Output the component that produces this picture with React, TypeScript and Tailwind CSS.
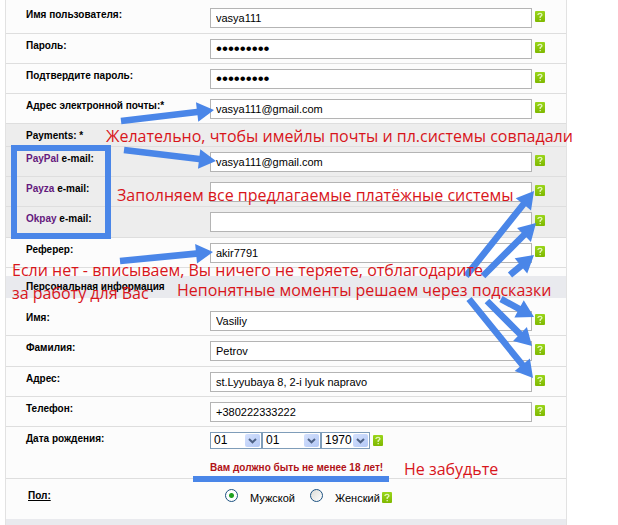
import { ReactNode } from "react";

type Point = [number, number];

const ARROWS: { from: Point; to: Point }[] = [
  { from: [121, 121], to: [214, 110] },
  { from: [124, 150], to: [216, 161] },
  { from: [120, 261], to: [213, 252] },
  { from: [466, 276], to: [534, 191] },
  { from: [483, 276], to: [536, 223] },
  { from: [510, 275], to: [534, 255] },
  { from: [501, 299], to: [534, 317] },
  { from: [487, 301], to: [532, 346] },
  { from: [469, 299], to: [533, 378] },
];

// outline of a block arrow: 6px shaft, 17px head
const arrowPoints = ([x1, y1]: Point, [x2, y2]: Point) => {
  const length = Math.hypot(x2 - x1, y2 - y1);
  const ux = (x2 - x1) / length;
  const uy = (y2 - y1) / length;
  const at = (along: number, side: number) =>
    `${x1 + ux * along - uy * side},${y1 + uy * along + ux * side}`;
  const neck = length - 17;
  return [
    at(0, -3.3),
    at(neck, -3.3),
    at(neck, -9.8),
    at(length, 0),
    at(neck, 9.8),
    at(neck, 3.3),
    at(0, 3.3),
  ].join(" ");
};

const Help = () => (
  <button
    type="button"
    aria-label="Подсказка"
    className="mt-[3px] h-[11px] w-[10px] shrink-0 rounded-[1px] bg-linear-to-b from-[#9ad61a] to-[#7fb800]"
  >
    <svg viewBox="0 0 10 11" className="block h-[11px] w-[10px]" fill="none">
      <path
        d="M3 4V3.4Q3.2 2.4 5 2.4T7 3.8Q7 4.8 5.2 5.6V7M5.2 8V9.2"
        stroke="#e3f5bd"
        strokeWidth="1.3"
      />
    </svg>
  </button>
);

type FieldProps = {
  id: string;
  label: ReactNode;
  value?: string;
  type?: string;
  className?: string;
};

const Field = ({
  id,
  label,
  value = "",
  type = "text",
  className = "h-[30px] pt-[5px]",
}: FieldProps) => (
  <div
    className={`flex items-start border-b border-[#dedede] pr-[21px] pl-5 ${className}`}
  >
    <label
      htmlFor={id}
      className="w-[184px] shrink-0 text-[10px] leading-[14px] font-bold"
    >
      {label}
    </label>
    <input
      id={id}
      type={type}
      defaultValue={value}
      className={`mr-[3px] h-5 min-w-0 flex-1 border border-[#b4b4b4] bg-white px-[5px] outline-none ${
        type === "password" ? "text-[17px]" : "text-[11px]"
      }`}
    />
    <Help />
  </div>
);

const DateSelect = ({
  label,
  value,
  className,
}: {
  label: string;
  value: string;
  className: string;
}) => (
  <div className={`relative h-[17px] ${className}`}>
    <select
      aria-label={label}
      defaultValue={value}
      className="block h-full w-full appearance-none border border-[#7f9db9] bg-white pl-[3px] text-[12px] leading-[15px] outline-none"
    >
      <option>{value}</option>
    </select>
    <span className="pointer-events-none absolute top-[2px] right-[2px] flex h-[13px] w-[15px] items-center justify-center rounded-[2px] bg-linear-to-br from-[#d5e1fd] to-[#b3c8f5]">
      <svg viewBox="0 0 9 6" className="h-[6px] w-[9px]" fill="none">
        <path d="M1 1L4.500 4.300L8 1" stroke="#4d6185" strokeWidth="2" />
      </svg>
    </span>
  </div>
);

const Radio = ({
  id,
  label,
  checked,
}: {
  id: string;
  label: string;
  checked?: boolean;
}) => (
  <>
    <input
      id={id}
      type="radio"
      name="gender"
      defaultChecked={checked}
      className="h-[13px] w-[13px] shrink-0 appearance-none rounded-full border border-[#1d5281] bg-linear-to-br from-[#dcdcd7] to-white checked:bg-[radial-gradient(circle,#21a121_0_2px,#ffffff_3px)]"
    />
    <label htmlFor={id} className="mt-[2px] ml-3 text-[11px] leading-[14px]">
      {label}
    </label>
  </>
);

const Note = ({
  className,
  children,
}: {
  className: string;
  children: ReactNode;
}) => (
  <p
    className={`absolute font-['Open_Sans',sans-serif] text-[16px] leading-5 whitespace-nowrap text-[#d8151b] ${className}`}
  >
    {children}
  </p>
);

const PaymentLabel = ({ name }: { name: string }) => (
  <>
    <a href="#" className="text-[#64197d]">
      {name}
    </a>{" "}
    e-mail:
  </>
);

const App = () => {
  return (
    <div className="relative bg-white font-['Liberation_Sans',sans-serif] text-black">
      <form className="ml-[5px] max-w-[562px] border-x border-[#e2e2e2] bg-[#fcfcfc]">
        <Field
          id="login"
          label="Имя пользователя:"
          value="vasya111"
          className="h-[34px] pt-2"
        />
        <Field id="password" type="password" label="Пароль:" value="123456789" />
        <Field
          id="confirm"
          type="password"
          label="Подтвердите пароль:"
          value="123456789"
        />
        <Field
          id="email"
          label="Адрес электронной почты:*"
          value="vasya111@gmail.com"
        />

        <div className="bg-[#ededed]">
          <h2 className="h-[23px] border-b border-[#dedede] pt-[5px] pl-5 text-[10px] leading-[14px] font-bold">
            Payments: *
          </h2>
          <Field
            id="paypal"
            label={<PaymentLabel name="PayPal" />}
            value="vasya111@gmail.com"
          />
          <Field id="payza" label={<PaymentLabel name="Payza" />} />
          <Field
            id="okpay"
            label={<PaymentLabel name="Okpay" />}
            className="h-[31px] pt-[5px]"
          />
        </div>
        <Field id="referer" label="Реферер:" value="akir7791" />

        <h2 className="mt-2 bg-[#e9eaee] pl-5 text-[10px] leading-[22px] font-bold">
          Персональная информация
        </h2>
        <Field
          id="name"
          label="Имя:"
          value="Vasiliy"
          className="h-[38px] pt-[13px]"
        />
        <Field
          id="surname"
          label="Фамилия:"
          value="Petrov"
          className="h-[31px] pt-[5px]"
        />
        <Field
          id="address"
          label="Адрес:"
          value="st.Lyyubaya 8, 2-i lyuk napravo"
        />
        <Field id="phone" label="Телефон:" value="+380222333222" />

        <div className="flex h-[52px] border-b border-[#dedede] pt-[5px] pl-5">
          <span className="w-[184px] shrink-0 text-[10px] leading-[14px] font-bold">
            Дата рождения:
          </span>
          <div>
            <div className="flex items-start">
              <DateSelect label="День" value="01" className="w-[52px]" />
              <DateSelect label="Месяц" value="01" className="w-[59px]" />
              <DateSelect label="Год" value="1970" className="mr-[3px] w-[49px]" />
              <Help />
            </div>
            <p className="mt-3 text-[10px] leading-[14px] font-bold text-[#b01116]">
              Вам должно быть не менее 18 лет!
            </p>
          </div>
        </div>

        <div className="flex h-10 items-start pt-[10px] pl-[22px]">
          <span className="w-[197px] shrink-0 text-[10px] leading-[14px] font-bold underline">
            Пол:
          </span>
          <Radio id="male" label="Мужской" checked />
          <span className="w-[15px]" />
          <Radio id="female" label="Женский" />
          <span className="w-[2px]" />
          <Help />
        </div>
        <div className="h-[6px] bg-[#e9eaee]" />
      </form>

      <div className="pointer-events-none absolute inset-0 overflow-hidden">
        <svg className="absolute top-0 left-0 h-[525px] w-[618px]">
          <g fill="#4a86e8">
            {ARROWS.map(({ from, to }) => (
              <polygon key={from.join()} points={arrowPoints(from, to)} />
            ))}
          </g>
        </svg>
        <div className="absolute top-[145px] left-[11px] h-[94px] w-[100px] border-6 border-[#4a86e8]" />
        <div className="absolute top-[476px] left-[193px] h-[6px] w-[196px] bg-[#4a86e8]" />

        <Note className="top-[126px] left-[106px]">
          Желательно, чтобы имейлы почты и пл.системы совпадали
        </Note>
        <Note className="top-[185px] left-[117px]">
          Заполняем все предлагаемые платёжные системы
        </Note>
        <Note className="top-[260px] left-[12px]">
          Если нет - вписываем, Вы ничего не теряете, отблагодарите
        </Note>
        <Note className="top-[283px] left-[12px]">за работу для Вас</Note>
        <Note className="top-[280px] left-[177px]">
          Непонятные моменты решаем через подсказки
        </Note>
        <Note className="top-[459px] left-[404px]">Не забудьте</Note>
      </div>
    </div>
  );
};

export default App;
